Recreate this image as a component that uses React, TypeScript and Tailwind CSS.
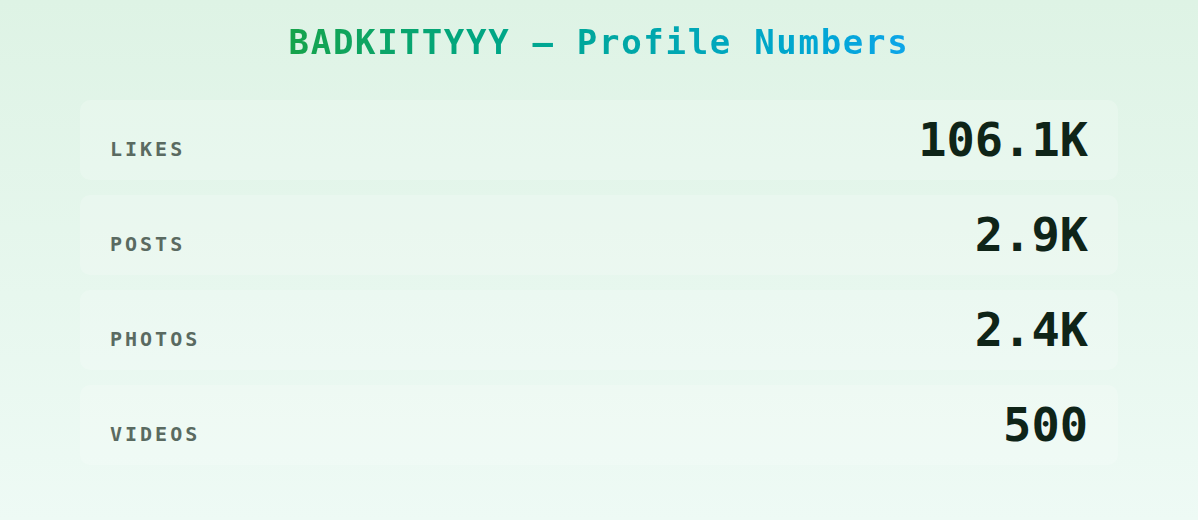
const stats = [
  { label: "LIKES", value: "106.1K" },
  { label: "POSTS", value: "2.9K" },
  { label: "PHOTOS", value: "2.4K" },
  { label: "VIDEOS", value: "500" },
];

export default function App() {
  return (
    <div className="min-h-[520px] w-full bg-gradient-to-b from-[#def3e5] to-[#eefaf5] px-20 pt-[22px] font-['DejaVu_Sans_Mono',monospace]">
      <h1 className="mb-[38px] text-center text-[34px] font-bold leading-[40px] tracking-[0.05em]">
        <span className="bg-gradient-to-r from-[#16a34a] to-[#0ea5e9] bg-clip-text text-transparent">
          BADKITTYYY — Profile Numbers
        </span>
      </h1>

      <div className="flex flex-col gap-[15px]">
        {stats.map((s) => (
          <div
            key={s.label}
            className="flex h-20 items-baseline justify-between rounded-[10px] bg-white/20 px-[30px] pt-4"
          >
            <span className="text-[20px] font-bold leading-none tracking-[0.15em] text-[#5a6a61]">
              {s.label}
            </span>
            <span className="text-[47px] font-bold leading-none text-[#0f2418]">
              {s.value}
            </span>
          </div>
        ))}
      </div>
    </div>
  );
}
